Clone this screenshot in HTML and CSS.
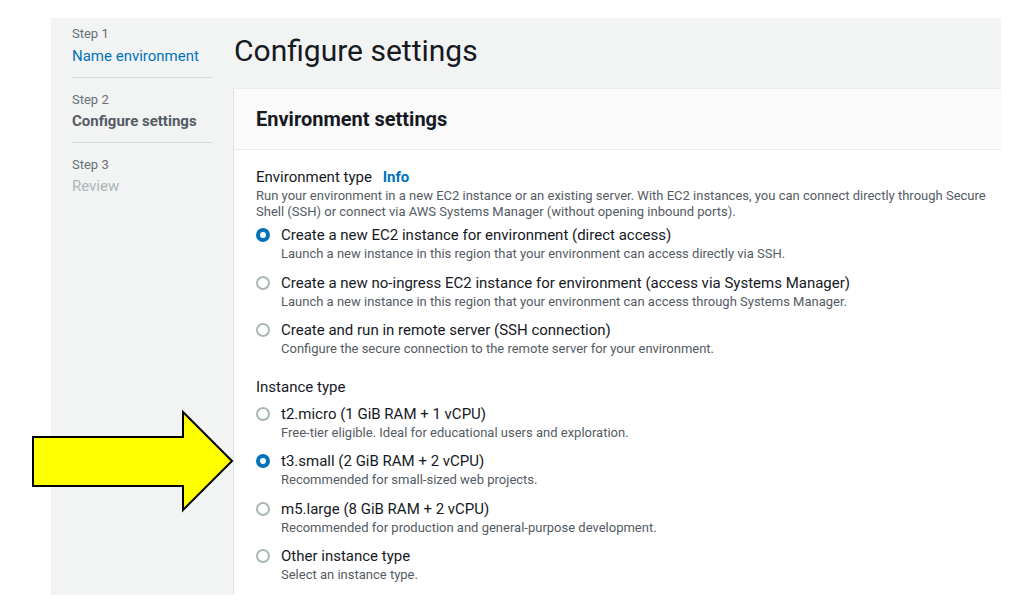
FILE: index.html
```html
<!DOCTYPE html>
<html lang="en">
<head>
<meta charset="utf-8">
<title>Configure settings</title>
<link rel="stylesheet" href="styles.css">
</head>
<body>
<div class="frame">
  <nav class="steps">
    <div class="step first">
      <div class="step-num">Step 1</div>
      <div class="step-name link">Name environment</div>
    </div>
    <div class="step">
      <div class="step-num">Step 2</div>
      <div class="step-name current">Configure settings</div>
    </div>
    <div class="step">
      <div class="step-num">Step 3</div>
      <div class="step-name disabled">Review</div>
    </div>
  </nav>
  <main class="main">
    <h1 class="title">Configure settings</h1>
    <section class="card">
      <header class="card-header"><h2>Environment settings</h2></header>
      <div class="card-body">
        <div class="field">
          <div class="field-label">Environment type <span class="info">Info</span></div>
          <div class="field-desc">Run your environment in a new EC2 instance or an existing server. With EC2 instances, you can connect directly through Secure<br>Shell (SSH) or connect via AWS Systems Manager (without opening inbound ports).</div>
          <div class="radios">
            <div class="radio-row">
              <span class="radio checked"></span>
              <div class="radio-text">
                <div class="radio-label">Create a new EC2 instance for environment (direct access)</div>
                <div class="radio-desc">Launch a new instance in this region that your environment can access directly via SSH.</div>
              </div>
            </div>
            <div class="radio-row">
              <span class="radio"></span>
              <div class="radio-text">
                <div class="radio-label">Create a new no-ingress EC2 instance for environment (access via Systems Manager)</div>
                <div class="radio-desc">Launch a new instance in this region that your environment can access through Systems Manager.</div>
              </div>
            </div>
            <div class="radio-row">
              <span class="radio"></span>
              <div class="radio-text">
                <div class="radio-label">Create and run in remote server (SSH connection)</div>
                <div class="radio-desc">Configure the secure connection to the remote server for your environment.</div>
              </div>
            </div>
          </div>
        </div>
        <div class="field second">
          <div class="field-label">Instance type</div>
          <div class="radios tight">
            <div class="radio-row">
              <span class="radio"></span>
              <div class="radio-text">
                <div class="radio-label">t2.micro (1 GiB RAM + 1 vCPU)</div>
                <div class="radio-desc">Free-tier eligible. Ideal for educational users and exploration.</div>
              </div>
            </div>
            <div class="radio-row">
              <span class="radio checked"></span>
              <div class="radio-text">
                <div class="radio-label">t3.small (2 GiB RAM + 2 vCPU)</div>
                <div class="radio-desc">Recommended for small-sized web projects.</div>
              </div>
            </div>
            <div class="radio-row">
              <span class="radio"></span>
              <div class="radio-text">
                <div class="radio-label">m5.large (8 GiB RAM + 2 vCPU)</div>
                <div class="radio-desc">Recommended for production and general-purpose development.</div>
              </div>
            </div>
            <div class="radio-row">
              <span class="radio"></span>
              <div class="radio-text">
                <div class="radio-label">Other instance type</div>
                <div class="radio-desc">Select an instance type.</div>
              </div>
            </div>
          </div>
        </div>
      </div>
    </section>
  </main>
</div>
<svg class="arrow" width="210" height="110" viewBox="28 406 210 110" aria-hidden="true">
  <polygon points="33,437 183,437 183,412 232,461 183,510 183,486 33,486" fill="#ffff00" stroke="#000" stroke-width="2" stroke-linejoin="miter"/>
</svg>
</body>
</html>
```

FILE: styles.css
```css
* { box-sizing: border-box; }
html, body { margin: 0; padding: 0; background: #ffffff; }
body {
  font-family: Roboto, "Liberation Sans", sans-serif;
  color: #16191f;
  position: relative;
  width: 1022px;
  height: 610px;
  overflow: hidden;
}
.frame {
  margin: 18px 0 0 51px;
  width: 950px;
  height: 577px;
  background: #f2f3f3;
  display: flex;
  overflow: hidden;
}
.steps {
  width: 182px;
  flex: none;
  padding: 0 21px;
}
.step {
  padding: 13px 0 10px;
  border-top: 1px solid #d5dbdb;
}
.step.first { padding-top: 7px; padding-bottom: 10px; border-top: none; }
.step-num {
  font-size: 13px;
  line-height: 18px;
  color: #687078;
}
.step-name {
  margin-top: 2px;
  font-size: 15px;
  line-height: 22px;
}
.step-name.link { color: #0073bb; }
.step-name.current { font-weight: 700; color: #545b64; margin-top: 1px; }
.step-name.disabled { color: #aab7b8; margin-top: 1px; }
.main {
  flex: 1;
  min-width: 0;
}
.title {
  margin: 0;
  padding: 15px 0 0 1px;
  height: 70px;
  font-size: 30px;
  line-height: 36px;
  font-weight: 400;
  color: #16191f;
}
.card {
  background: #ffffff;
  border-left: 1px solid #dfe3e3;
  border-top: 1px solid #eaeded;
  height: 600px;
}
.card-header {
  background: #fafafa;
  height: 61px;
  border-bottom: 1px solid #eaeded;
  padding: 0 22px;
  display: flex;
  align-items: center;
}
.card-header h2 {
  margin: 0;
  font-size: 20px;
  font-weight: 700;
  line-height: 24px;
  color: #16191f;
}
.card-body {
  padding: 17px 8px 0 22px;
}
.field-label {
  font-size: 15px;
  line-height: 20px;
  color: #16191f;
}
.info {
  color: #0073bb;
  font-weight: 700;
  margin-left: 7px;
}
.field-desc {
  font-size: 13px;
  line-height: 16px;
  color: #545b64;
  margin-top: 1px;
  white-space: nowrap;
}
.radios {
  margin-top: 5px;
}
.radios.tight { margin-top: 7px; }
.radio-row {
  display: flex;
  align-items: flex-start;
  gap: 11px;
  margin-bottom: 9.6px;
}
.radio {
  flex: none;
  width: 14px;
  height: 14px;
  margin-top: 3px;
  border-radius: 50%;
  border: 2px solid #aab7b8;
  background: #fff;
}
.radio.checked {
  border: 4.5px solid #0073bb;
}
.radio-label {
  font-size: 15px;
  line-height: 20px;
}
.radio-desc {
  font-size: 13px;
  line-height: 18px;
  color: #545b64;
}
.field.second { margin-top: 18.4px; }
.arrow {
  position: absolute;
  left: 28px;
  top: 406px;
}
```
